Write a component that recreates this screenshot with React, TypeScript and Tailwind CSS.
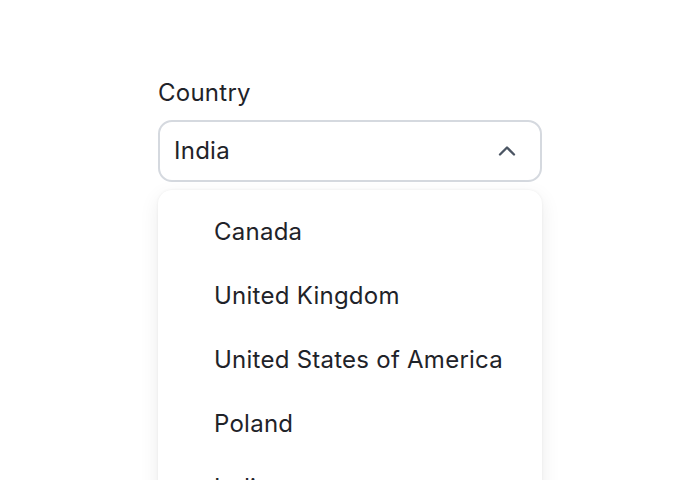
import { ChevronUp } from "lucide-react";

const countries = ["Canada", "United Kingdom", "United States of America", "Poland", "India"];

export default function App() {
  return (
    <div
      className="h-[480px] w-[700px] overflow-hidden bg-white text-[#1f2329] tracking-[0.25px]"
      style={{ fontFamily: "Inter, 'Noto Sans', sans-serif" }}
    >
      <div className="ml-[158px] w-[384px] pt-[79px]">
        <label className="block text-[24px] leading-[28px]">Country</label>
        <button className="mt-[13px] flex h-[62px] w-full items-center justify-between rounded-[14px] border-2 border-[#d5d9df] bg-white pl-[14px] pr-[19px] text-left text-[24px] tracking-[0.25px]">
          <span>India</span>
          <ChevronUp className="h-[28px] w-[28px] text-[#4b5563]" strokeWidth={2} />
        </button>
        <ul className="mt-2 rounded-[14px] bg-white py-[10px] shadow-[0_6px_20px_rgba(0,0,0,0.08),0_0_3px_rgba(0,0,0,0.06)]">
          {countries.map((c) => (
            <li key={c} className="flex h-16 items-center pl-[56px] text-[24px]">
              {c}
            </li>
          ))}
        </ul>
      </div>
    </div>
  );
}
